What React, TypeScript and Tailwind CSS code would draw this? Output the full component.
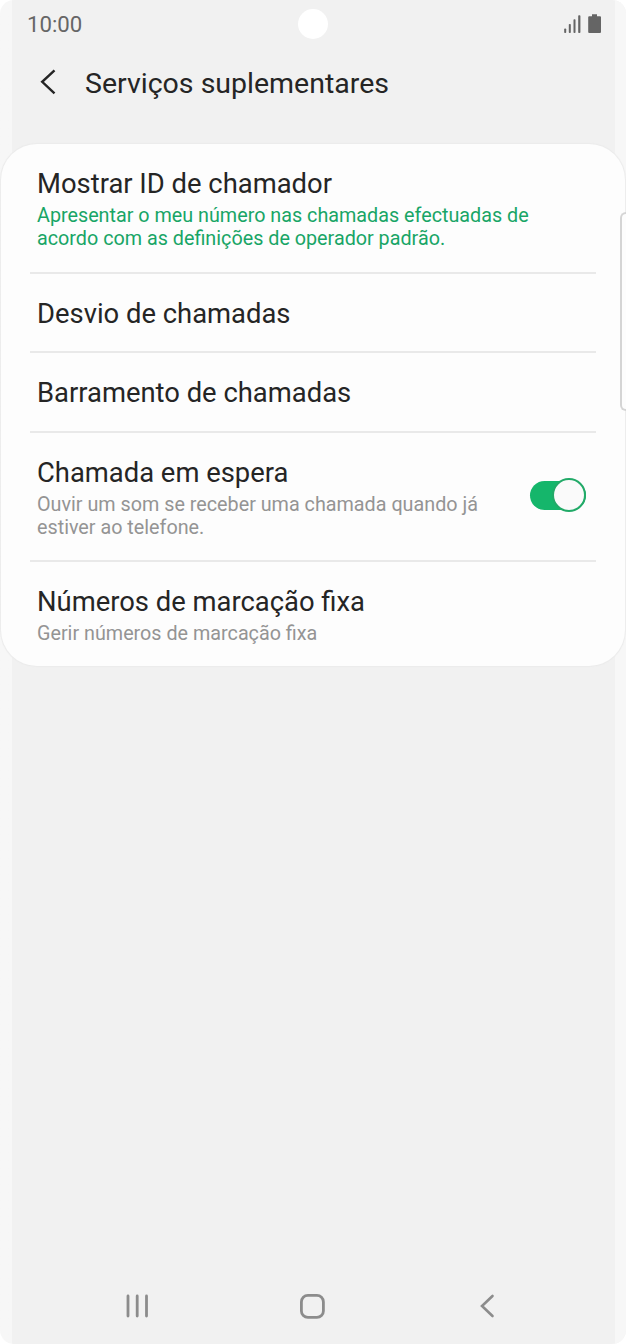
import React, { useState } from "react";
import { clsx } from "clsx";

interface SettingRowProps {
  title: string;
  lines?: string[];
  className?: string;
  linesClass?: string;
  children?: React.ReactNode;
}

function SettingRow({ title, lines = [], className, linesClass = "text-[#949494]", children }: SettingRowProps) {
  return (
    <div className={clsx("flex items-center justify-between pl-[7px] pr-[10px] pt-0.5", className)}>
      <div className="flex flex-col whitespace-nowrap">
        <h2 className={clsx("text-[27.4px] leading-8 text-[#252525]", lines.length > 0 && "mb-1")}>{title}</h2>
        {lines.map((line) => (
          <p key={line} className={clsx("text-[19.75px] leading-[23px]", linesClass)}>
            {line}
          </p>
        ))}
      </div>
      {children}
    </div>
  );
}

function StatusBar() {
  return (
    <div className="grid h-12 grid-cols-3 items-center pl-[27px] pr-[24px] text-[#666]">
      <span className="text-[22.2px] leading-6">10:00</span>
      <span className="size-[30px] translate-x-[-1px] justify-self-center rounded-full bg-white" />
      <svg className="justify-self-end" width="38" height="20" viewBox="0 0 38 20" fill="#656565">
        <rect x="0.2" y="14.5" width="2" height="4.5" rx="0.8" />
        <rect x="4.8" y="10" width="2" height="9" rx="0.8" />
        <rect x="9.5" y="5.3" width="2" height="13.7" rx="0.8" />
        <rect x="14.2" y="1.2" width="2.2" height="17.8" rx="0.8" />
        <path d="M28 0.3h5v2h3a1 1 0 0 1 1 1V18a1 1 0 0 1-1 1H25.2a1 1 0 0 1-1-1V3.3a1 1 0 0 1 1-1H28z" />
      </svg>
    </div>
  );
}

export default function App() {
  const [waiting, setWaiting] = useState(true);

  return (
    <div className="h-[1344px] w-[626px] overflow-hidden bg-white font-['Roboto',sans-serif]">
      <div className="relative flex h-full flex-col overflow-hidden rounded-[14px] bg-linear-to-r from-[#f7f7f7] from-[11.5px] via-[#f1f1f1] via-[11.5px] to-[#f1f1f1]">
        {/* curved right edge of the screen */}
        <div className="absolute inset-y-0 right-0 w-[11px] bg-[#f7f7f7]" />

        <div className="relative flex flex-1 flex-col">
          <StatusBar />

          <header className="flex h-24 items-start pl-[40px] pt-[17px]">
            <svg className="mt-1" width="17" height="26" viewBox="0 0 17 26" fill="none" stroke="#252525" strokeWidth="2.4">
              <path d="M14.5 1.3 2.2 12.8l12.3 11.5" />
            </svg>
            <h1 className="ml-[28px] mt-px whitespace-nowrap text-[28.5px] leading-9 text-[#252525]">Serviços suplementares</h1>
          </header>

          <main className="mx-px flex h-[522px] flex-col rounded-[36px] bg-[#fdfdfd] px-[29px] shadow-[0_0_1px_1px_#ebebeb]">
            <SettingRow
              className="h-[130px] border-b-2 border-[#e9e9e9]"
              title="Mostrar ID de chamador"
              lines={["Apresentar o meu número nas chamadas efectuadas de", "acordo com as definições de operador padrão."]}
              linesClass="text-[#18a566]"
            />
            <SettingRow className="h-[79px] border-b-2 border-[#e9e9e9]" title="Desvio de chamadas" />
            <SettingRow className="h-[80px] border-b-2 border-[#e9e9e9]" title="Barramento de chamadas" />
            <SettingRow
              className="h-[129px] border-b-2 border-[#e9e9e9]"
              title="Chamada em espera"
              lines={["Ouvir um som se receber uma chamada quando já", "estiver ao telefone."]}
            >
              <button
                role="switch"
                aria-checked={waiting}
                onClick={() => setWaiting(!waiting)}
                className={clsx(
                  "mb-[5px] flex h-[29px] w-14 items-center rounded-full",
                  waiting ? "justify-end bg-[#15b66b]" : "justify-start bg-gray-300"
                )}
              >
                <span className={clsx("size-[34px] shrink-0 rounded-full border-2 bg-[#fafafa]", waiting ? "border-[#22aa68]" : "border-gray-400")} />
              </button>
            </SettingRow>
            <SettingRow className="h-[104px]" title="Números de marcação fixa" lines={["Gerir números de marcação fixa"]} />
          </main>
        </div>

        <nav className="flex h-[76px] items-center pl-[125px]">
          <svg width="24" height="24" viewBox="0 0 24 24" stroke="#8c8c8c" strokeWidth="2.8" strokeLinecap="round">
            <path d="M3 2v20M12.2 2v20M21.5 2v20" />
          </svg>
          <svg className="ml-[150px]" width="26" height="26" viewBox="0 0 26 26" fill="none" stroke="#8c8c8c" strokeWidth="2.8">
            <rect x="2.4" y="2.4" width="22" height="22" rx="6.5" />
          </svg>
          <svg className="ml-[154px]" width="16" height="24" viewBox="0 0 16 24" fill="none" stroke="#8c8c8c" strokeWidth="2.6" strokeLinecap="round">
            <path d="M13.5 2 3 12l10.5 10" />
          </svg>
        </nav>

        {/* edge panel handle */}
        <div className="absolute right-0 top-[212px] h-[199px] w-[6px] rounded-l-[8px] border-2 border-r-0 border-[#d5d5d5] bg-[#fdfdfd]" />
      </div>
    </div>
  );
}
